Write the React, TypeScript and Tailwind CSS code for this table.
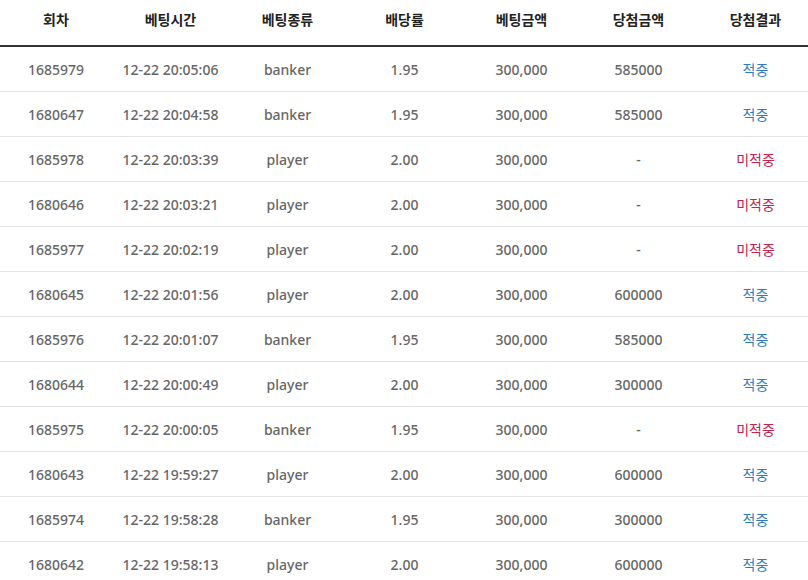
const rows: [string, string, string, string, string, string, boolean][] = [
  ["1685979", "12-22 20:05:06", "banker", "1.95", "300,000", "585000", true],
  ["1680647", "12-22 20:04:58", "banker", "1.95", "300,000", "585000", true],
  ["1685978", "12-22 20:03:39", "player", "2.00", "300,000", "-", false],
  ["1680646", "12-22 20:03:21", "player", "2.00", "300,000", "-", false],
  ["1685977", "12-22 20:02:19", "player", "2.00", "300,000", "-", false],
  ["1680645", "12-22 20:01:56", "player", "2.00", "300,000", "600000", true],
  ["1685976", "12-22 20:01:07", "banker", "1.95", "300,000", "585000", true],
  ["1680644", "12-22 20:00:49", "player", "2.00", "300,000", "300000", true],
  ["1685975", "12-22 20:00:05", "banker", "1.95", "300,000", "-", false],
  ["1680643", "12-22 19:59:27", "player", "2.00", "300,000", "600000", true],
  ["1685974", "12-22 19:58:28", "banker", "1.95", "300,000", "300000", true],
  ["1680642", "12-22 19:58:13", "player", "2.00", "300,000", "600000", true],
];

const headers = ["회차", "베팅시간", "베팅종류", "배당률", "베팅금액", "당첨금액", "당첨결과"];

const cols = "grid grid-cols-[112px_117px_117px_117px_117px_117px_117px]";

export default function App() {
  return (
    <div
      className="w-[808px] h-[580px] overflow-hidden bg-white text-[14px]"
      style={{ fontFamily: '"Noto Sans", "Noto Sans CJK KR", sans-serif' }}
    >
      <div className={`${cols} h-[47px] border-b-2 border-[#333] items-center`}>
        {headers.map((h) => (
          <div key={h} className="text-center font-bold text-[#222] -mt-[6px]">
            {h}
          </div>
        ))}
      </div>
      {rows.map((r) => (
        <div key={r[0] + r[1]} className={`${cols} h-[45px] border-b border-[#e2e2e2] items-center text-[#666] font-medium`}>
          <div className="text-center">{r[0]}</div>
          <div className="text-center">{r[1]}</div>
          <div className="text-center">{r[2]}</div>
          <div className="text-center">{r[3]}</div>
          <div className="text-center">{r[4]}</div>
          <div className="text-center">{r[5]}</div>
          <div className={r[6] ? "text-center text-[#2e7cc0] font-normal" : "text-center text-[#c4234d] font-normal"}>
            {r[6] ? "적중" : "미적중"}
          </div>
        </div>
      ))}
    </div>
  );
}
